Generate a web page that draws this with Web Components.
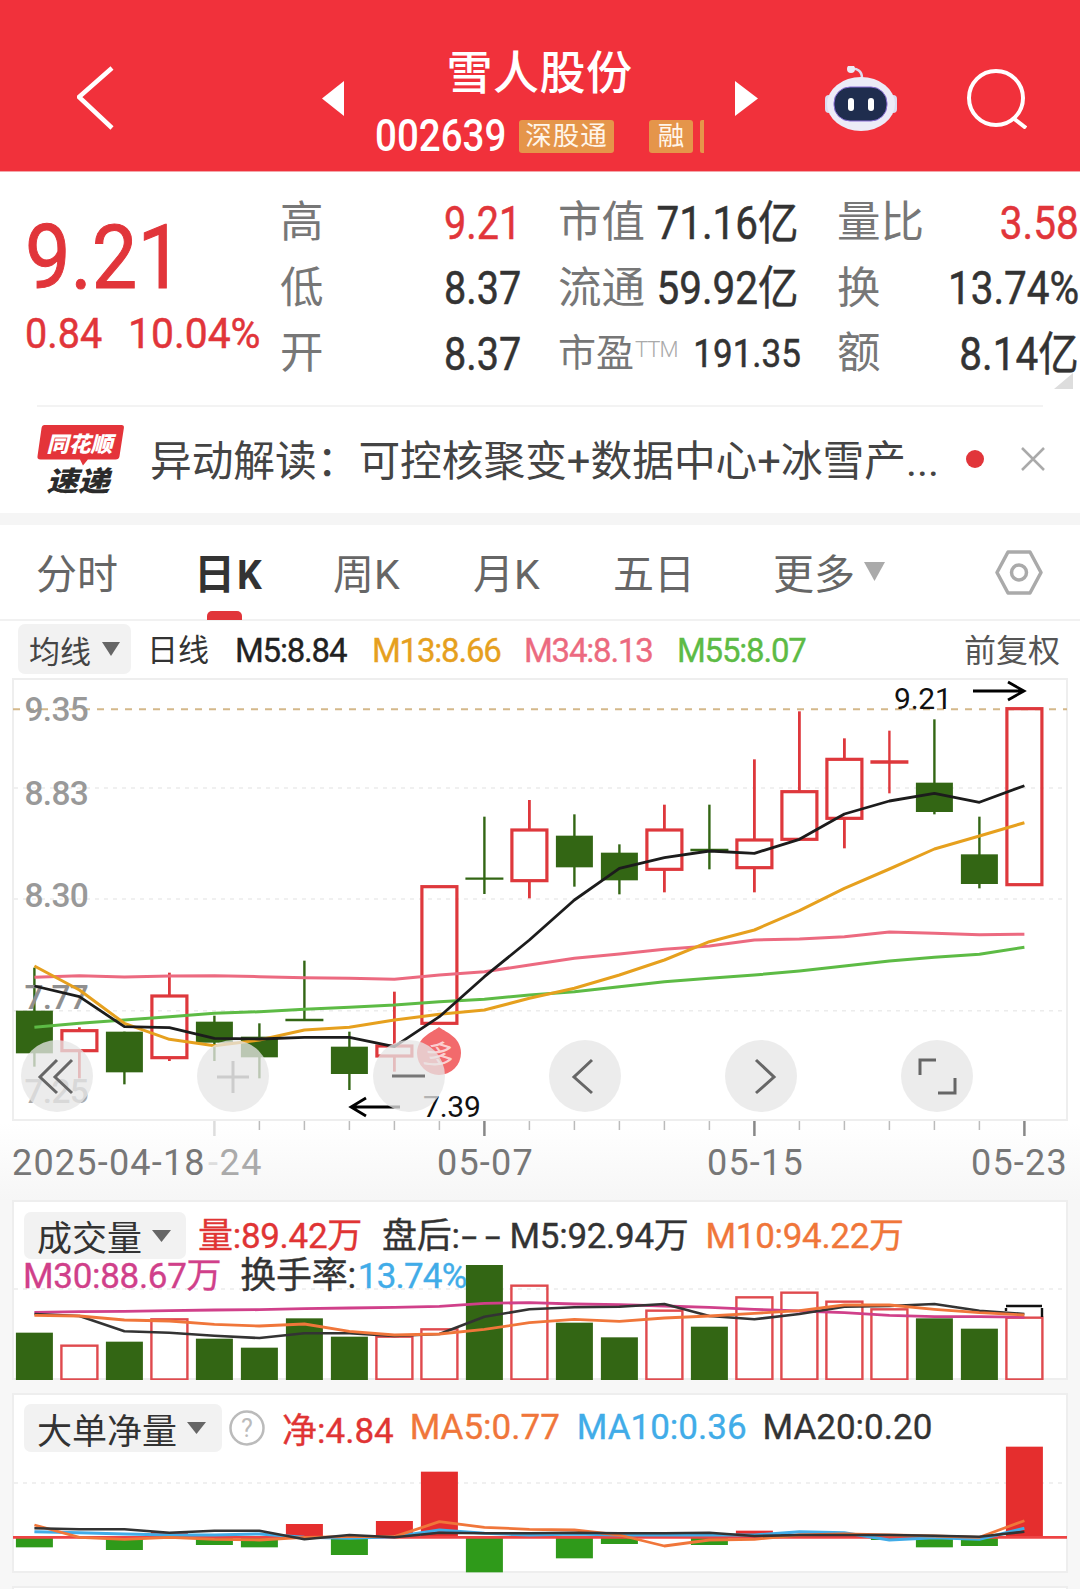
<!DOCTYPE html>
<html lang="zh"><head><meta charset="utf-8"><title>雪人股份</title>
<style>
html,body{margin:0;padding:0;background:#f7f7f7}
body{width:1080px;height:1589px;overflow:hidden;font-family:Roboto,"Noto Sans CJK SC",sans-serif;color:#333}
</style></head><body>
<stock-screen>
  <stock-header name="雪人股份" code="002639"></stock-header>
  <quote-panel></quote-panel>
  <news-banner>异动解读：可控核聚变+数据中心+冰雪产...</news-banner>
  <period-tabs></period-tabs>
  <ma-legend></ma-legend>
  <kline-chart></kline-chart>
  <volume-panel></volume-panel>
  <bigorder-panel></bigorder-panel>
  <panel-stub></panel-stub>
</stock-screen>
<script>
const FONT='Roboto,"Noto Sans CJK SC",sans-serif';
const XI=i=>+(34.4+45*i).toFixed(1);
function shadow(el,html){const r=el.attachShadow({mode:'open'});r.innerHTML=html;return r;}
function poly(vals,ymap,color,w){
  const p=vals.map((v,i)=>XI(i)+','+ymap(v).toFixed(1)).join(' ');
  return `<polyline points="${p}" fill="none" stroke="${color}" stroke-width="${w}" stroke-linejoin="round" stroke-linecap="butt"/>`;
}
const dotted=(y,x1=14,x2=1066)=>`<line x1="${x1}" x2="${x2}" y1="${y}" y2="${y}" stroke="#ececec" stroke-width="1.5" stroke-dasharray="4 5"/>`;

customElements.define('stock-screen',class extends HTMLElement{constructor(){super();shadow(this,`<style>:host{display:flex;flex-direction:column;width:1080px;height:1589px;overflow:hidden}</style><slot></slot>`);}});
customElements.define('panel-stub',class extends HTMLElement{constructor(){super();shadow(this,`<style>:host{display:block;width:1056px;margin:13px 0 0 12px;height:16px;background:#fff;box-sizing:border-box;border:2px solid #eee;border-bottom:0;flex:none}</style>`);}});

customElements.define('stock-header',class extends HTMLElement{constructor(){super();
 shadow(this,`<style>
 :host{display:grid;grid-template-columns:77px 245px 22px 391px 23px 67px 72px 69px 61px;height:172px;background:#F1313B;color:#fff;align-items:center;box-sizing:border-box;border-bottom:1px solid #f3a6aa;flex:none}
 svg{display:block;margin-top:26px}
 .mid{display:flex;flex-direction:column;height:172px;box-sizing:border-box;padding-top:44px}
 .t{font-size:46px;line-height:58px;text-align:center;letter-spacing:.5px;font-weight:500}
 .s{display:flex;align-items:center;padding-left:31px;margin-top:17px;height:34px}
 .c{font-size:44px;line-height:34px;width:144px;flex:none;transform:scaleX(.875);transform-origin:left;font-weight:500}
 .chip{background:#E5954A;border-radius:3px;height:33px;line-height:32px;font-size:26.500px;text-align:center;color:#fff6ea;flex:none}
 .a{width:95px;margin-right:35px;letter-spacing:1px}
 .b{width:44px;margin-right:7px}
 .e{width:4px;border-radius:2px 0 0 2px}
 </style>
 <span></span>
 <svg width="45" height="70" viewBox="0 0 45 70"><path d="M35 4 2 33 35 64" fill="none" stroke="#fff" stroke-width="4.500"/></svg>
 <svg width="22" height="36" viewBox="0 0 22 36"><path d="M22 0V35L0 17.500Z" fill="#fff"/></svg>
 <div class="mid"><div class="t">${this.getAttribute('name')}</div><div class="s"><span class="c">${this.getAttribute('code')}</span><span class="chip a">深股通</span><span class="chip b">融</span><span class="chip e"></span></div></div>
 <svg width="23" height="36" viewBox="0 0 23 36"><path d="M0 0V35L23 17.500Z" fill="#fff"/></svg>
 <span></span>
 <svg width="72" height="66" viewBox="825 65 72 66">
   <path d="M851 68c6-1 11 2 11 9" fill="none" stroke="#dcdcf0" stroke-width="2.500"/><circle cx="851" cy="68" r="4" fill="#eceaf6"/>
   <rect x="825" y="94" width="8" height="18" rx="4" fill="#dcdcf0"/><rect x="889" y="94" width="8" height="18" rx="4" fill="#dcdcf0"/>
   <ellipse cx="861" cy="103" rx="34" ry="27" fill="#ecebf7"/>
   <rect x="834" y="86" width="53" height="34" rx="16" fill="#1F2D4E" stroke="#8a6fd6" stroke-width="1"/>
   <rect x="848" y="97" width="6" height="13" rx="3" fill="#fff"/><rect x="868" y="97" width="6" height="13" rx="3" fill="#fff"/>
 </svg>
 <span></span>
 <svg width="61" height="60" viewBox="965 70 61 60"><circle cx="995" cy="99" r="27" fill="none" stroke="#fff" stroke-width="4"/><path d="M1012 119 1025 129" stroke="#fff" stroke-width="4"/></svg>
 `);}});

customElements.define('quote-panel',class extends HTMLElement{constructor(){super();
 const row=(l,v,red,l2,v2,l3,v3,red3,small)=>`
  <span class="l">${l}</span><span class="v"><b class="n ${red?'r':''}">${v}</b></span>
  <span class="l ${small?'sm':''}">${l2}${small?'<sup>TTM</sup>':''}</span><span class="v2"><b class="n2 ${small?'sm2':''}">${v2}</b></span>
  <span class="l">${l3}</span><span class="v3"><b class="n3 ${red3?'r':''}">${v3}</b></span>`;
 shadow(this,`<style>
 :host{display:grid;grid-template-columns:255px 1fr;height:233px;background:#fff;padding-left:25px;box-sizing:border-box;position:relative;width:1080px;flex:none}
 .left{padding-top:42px;color:#E1353A}
 .big{font-size:89px;line-height:88px;height:88px;width:175px;transform:scaleX(.91);transform-origin:left;-webkit-text-stroke:1px #E1353A}
 .sub{display:flex;font-size:43px;line-height:48px;margin-top:7px;-webkit-text-stroke:.5px #E1353A}
 .sub span{flex:none;transform-origin:left}
 .a{width:103px;transform:scaleX(.92)}
 .b{width:136px;transform:scaleX(.95)}
 .g{display:grid;grid-template-columns:164px 114px 95px 184px 110px 132px;grid-auto-rows:65.5px;padding-top:18px;align-items:center;font-size:46px}
 .l{font-size:43.500px;color:#777;line-height:65px;white-space:nowrap}
 .sm{font-size:38px}
 sup{font-size:22px;color:#aaa;font-weight:300;vertical-align:9px;line-height:0;letter-spacing:-1px;margin-left:1px}
 b{font-weight:400;display:inline-block;color:#333;white-space:nowrap;line-height:60px;-webkit-text-stroke:.5px currentColor}
 .r{color:#E1353A}
 .n{transform:scaleX(.86);transform-origin:left}
 .v{white-space:nowrap}
 .v2{display:flex;justify-content:flex-end;padding-right:38px;white-space:nowrap}
 .v3{display:flex;justify-content:flex-end;white-space:nowrap}
 .n2,.n3{transform:scaleX(.88);transform-origin:right}
 .sm2{font-size:38px;transform:scaleX(.92);margin-right:-2px}
 .cor{position:absolute;right:7px;top:201px}
 </style>
 <div class="left"><div class="big">9.21</div><div class="sub"><span class="a">0.84</span><span class="b">10.04%</span></div></div>
 <div class="g">
 ${row('高','9.21',1,'市值','71.16亿','量比','3.58',1)}
 ${row('低','8.37',0,'流通','59.92亿','换','13.74%',0)}
 ${row('开','8.37',0,'市盈','191.35','额','8.14亿',0,1)}
 </div>
 <svg class="cor" width="19" height="16" viewBox="0 0 19 16"><path d="M19 0V16H0Z" fill="#ddd"/></svg>`);}});

customElements.define('news-banner',class extends HTMLElement{constructor(){super();
 shadow(this,`<style>
 :host{display:flex;flex-direction:column;height:120px;background:#fff;box-sizing:border-box;width:1080px;flex:none}
 .hr{height:2px;background:#f3f3f3;margin:0 37px}
 .row{display:flex;align-items:center;height:106px;padding-left:37px}
 .logo{width:87px;height:71px;flex:none;margin-top:-1px;margin-right:26px;overflow:visible}
 .tx{width:791px;flex:none;font-size:41.700px;color:#444;white-space:nowrap;line-height:50px;margin-top:3px}
 .dot{width:18px;height:18px;border-radius:50%;background:#E1353A;flex:none;margin-left:25px;margin-top:-3px}
 svg.x{flex:none;margin-left:37px;margin-top:-3px}
 .gap{height:12px;background:#f5f5f5}
 text{font-family:"Noto Sans CJK SC",sans-serif;font-weight:900;font-style:italic}
 </style>
 <div class="hr"></div>
 <div class="row">
  <svg class="logo" viewBox="38 422 87 72"><path d="M45 423H123Q126 423 125.500 426L121 455Q120.500 458 117 458H89L84 464 81 458H41Q37 458 38 454L42 426Q42.500 423 45 423Z" fill="#E4343A"/>
   <text x="47" y="450" font-size="22" fill="#fff" textLength="67" lengthAdjust="spacingAndGlyphs">同花顺</text>
   <text x="47" y="490" font-size="28" fill="#2b2b2b" textLength="64" lengthAdjust="spacingAndGlyphs">速递</text></svg>
  <span class="tx"><slot></slot></span><span class="dot"></span>
  <svg class="x" width="24" height="24" viewBox="0 0 24 24"><path d="M1 1 23 23M23 1 1 23" stroke="#aaa" stroke-width="2.500"/></svg>
 </div>
 <div class="gap"></div>`);}});

customElements.define('period-tabs',class extends HTMLElement{constructor(){super();
 shadow(this,`<style>
 :host{display:grid;grid-template-columns:160px 137px 140px 140px 160px 222px 48px;height:96px;background:#fff;box-sizing:border-box;padding-left:36px;border-bottom:2px solid #f1f1f1;align-items:start;font-size:41px;color:#666;width:1080px;flex:none}
 span{line-height:48px;margin-top:26px;white-space:nowrap;position:relative;display:block}
 .on{font-weight:700;color:#333;margin-left:-2px}
 .on i{position:absolute;left:13px;top:60px;width:35px;height:9px;background:#E1353A;border-radius:5px 5px 0 0}
 .k{display:inline-block;font-weight:400}
 .on .k{font-weight:700;margin-left:2px;transform:scaleX(.95);transform-origin:left}
 svg{display:block}
 .m svg{display:inline-block;margin-left:9px;vertical-align:8px}
 .gear{margin-top:25px}
 </style>
 <span>分时</span><span class="on">日<b class="k">K</b><i></i></span><span>周<b class="k">K</b></span><span>月<b class="k">K</b></span><span>五日</span>
 <span class="m">更多<svg width="21" height="19" viewBox="0 0 21 19"><path d="M0 0H21L10.500 19Z" fill="#aaa"/></svg></span>
 <svg class="gear" width="48" height="45" viewBox="0 0 48 45"><path d="M13 2H35L46 22.500 35 43H13L2 22.500Z" fill="none" stroke="#aaa" stroke-width="3.500" stroke-linejoin="round"/><circle cx="24" cy="22.500" r="7.500" fill="none" stroke="#aaa" stroke-width="3.500"/></svg>`);}});

customElements.define('ma-legend',class extends HTMLElement{constructor(){super();
 shadow(this,`<style>
 :host{display:grid;grid-template-columns:129px 88px 137px 152px 153px 287px 1fr;height:57px;background:#fff;box-sizing:border-box;padding:3px 0 0 18px;font-size:33px;letter-spacing:-1.200px;white-space:nowrap;width:1080px;flex:none}
 span{line-height:50px;padding-top:2px;-webkit-text-stroke:.35px currentColor}
 .btn{width:113px;height:50px;background:#f2f2f2;border-radius:7px;display:flex;align-items:center;padding-left:11px;box-sizing:border-box;letter-spacing:0;font-size:31px;color:#444}
 .btn svg{margin-left:11px}
 .cn{letter-spacing:0;font-size:31px;color:#333;-webkit-text-stroke:0}
 </style>
 <div class="btn">均线<svg width="18" height="14" viewBox="0 0 18 14"><path d="M0 0H18L9 14Z" fill="#666"/></svg></div>
 <span class="cn">日线</span><span style="color:#222">M5:8.84</span><span style="color:#E6A01E">M13:8.66</span><span style="color:#EC6A80">M34:8.13</span><span style="color:#5DBB45">M55:8.07</span>
 <span class="cn" style="font-size:32px;color:#555">前复权</span>`);}});

customElements.define('kline-chart',class extends HTMLElement{constructor(){super();
 const Y=z=>670+z/3, RED='#DE383C', GRN='#336614';
 const C=[[893,1022,1150,1190,'g'],[1072,1082,1142,1225,'r'],[1085,1085,1207,1243,'g'],[908,978,1163,1173,'r'],[1037,1055,1118,1173,'g'],[1060,1100,1162,1225,'g'],[872,1050,1050,1050,'d'],[1085,1130,1212,1260,'g'],[965,1128,1158,1205,'r'],[650,650,1060,1060,'r'],[440,626,626,672,'d'],[390,480,632,685,'r'],[433,497,592,650,'g'],[523,548,631,673,'g'],[404,480,598,667,'r'],[404,540,540,598,'d'],[268,510,593,667,'r'],[124,365,508,510,'r'],[205,268,445,535,'r'],[182,276,276,370,'D'],[148,338,426,433,'g'],[440,553,642,655,'g'],[116,116,644,644,'r']];
 let s='';
 C.forEach((c,i)=>{const x=XI(i),[h,t,b,l,k]=c;
  if(k==='g'){s+=`<line x1="${x}" x2="${x}" y1="${Y(h)}" y2="${Y(l)}" stroke="${GRN}" stroke-width="2.400"/><rect x="${x-18.5}" y="${Y(t)}" width="37" height="${(b-t)/3}" fill="${GRN}"/>`;}
  else if(k==='d'||k==='D'){const col=k==='d'?GRN:RED;s+=`<line x1="${x}" x2="${x}" y1="${Y(h)}" y2="${Y(l)}" stroke="${col}" stroke-width="2.400"/><line x1="${x-19}" x2="${x+19}" y1="${Y(t)}" y2="${Y(t)}" stroke="${col}" stroke-width="${k==='d'?2.4:3.4}"/>`;}
  else{s+=`<line x1="${x}" x2="${x}" y1="${Y(h)}" y2="${Y(t)}" stroke="${RED}" stroke-width="2.800"/><line x1="${x}" x2="${x}" y1="${Y(b)}" y2="${Y(l)}" stroke="${RED}" stroke-width="2.800"/><rect x="${x-17.5}" y="${Y(t)}" width="35" height="${(b-t)/3}" fill="none" stroke="${RED}" stroke-width="3.200"/>`;}
 });
 const m5=[948,980,1070,1073,1105,1107,1102,1102,1130,1040,920,810,690,595,563,543,550,508,432,393,370,397,347];
 const m13=[888,960,1060,1108,1127,1110,1080,1072,1050,1033,1020,985,955,915,870,815,780,722,655,597,537,498,458];
 const m34=[922,917,921,918,917,920,923,925,928,915,905,885,865,852,838,828,810,807,800,786,790,794,793];
 const m55=[1072,1060,1050,1040,1030,1025,1018,1012,1005,995,988,975,965,950,935,925,915,903,888,873,862,853,832];
 const lab=(t,y,c='#999')=>`<text x="24.500" y="${y}" font-size="33.500" font-weight="500" fill="${c}" letter-spacing="-.7">${t}</text>`;
 const circ=x=>`<circle cx="${x}" cy="1076" r="36" fill="#e6e6e6" fill-opacity=".76"/>`;
 const ic=(d,c='#666')=>`<path d="${d}" fill="none" stroke="${c}" stroke-width="3"/>`;
 let ticks='';
 for(let i=4;i<=22;i++){const major=i===10||i===16||i===22,first=i===4;
  ticks+=`<line x1="${XI(i)}" x2="${XI(i)}" y1="1121" y2="${major||first?1136:1130}" stroke="${first?'#ddd':major?'#888':'#bbb'}" stroke-width="${major||first?2.5:1.500}"/>`;}
 shadow(this,`<style>
 :host{display:block;height:522px;width:1080px;background:linear-gradient(#fff 0,#fff 445px,#f6f6f6 100%);flex:none}
 svg{display:block;font-family:${FONT}}
 </style>
 <svg width="1080" height="522" viewBox="0 678 1080 522">
  <rect x="13" y="679" width="1054" height="441" fill="#fff" stroke="#eee" stroke-width="2"/>
  ${dotted(788)}${dotted(899)}${dotted(1010.7)}
  <line x1="13" x2="1067" y1="709.300" y2="709.300" stroke="#D4B88A" stroke-width="2" stroke-dasharray="7 7"/>
  ${lab('9.35',721)}${lab('8.83',805)}${lab('8.30',907)}
  ${s}
  ${lab('7.77',1009,'#8f8f8f')}
  ${lab('7.25',1103,'#aaa')}
  ${poly(m34,Y,'#EC6A80',3)}${poly(m55,Y,'#5DBB45',3)}${poly(m13,Y,'#E6A01E',3)}${poly(m5,Y,'#1c1c1c',2.8)}
  <text x="894" y="709" font-size="30" fill="#111" letter-spacing="-.2">9.21</text>
  <path d="M973 691H1024M1008 682 1024 691 1008 700" fill="none" stroke="#000" stroke-width="2.800"/>
  <path d="M400 1107H351M366 1098 351 1107 366 1116" fill="none" stroke="#000" stroke-width="2.800"/>
  <text x="423" y="1117" font-size="30" fill="#111" letter-spacing="-.2">7.39</text>
  <path d="M439 1027C443 1031 461 1036 461 1053A22 22 0 0 1 417 1053C417 1036 435 1031 439 1027Z" fill="#F26A6C"/>
  <text x="425" y="1066" font-size="30" fill="#fff" fill-opacity=".7" font-family="Noto Sans CJK SC" transform="rotate(18 439 1053)">多</text>
  ${[57,233,409,585,761,937].map(circ).join('')}
  ${ic('M57 1060 40 1077 57 1093M72 1060 55 1077 72 1093')}
  ${ic('M217 1077H249M233 1061V1093','#ccc')}
  ${ic('M392 1076H425','#777')}
  ${ic('M592 1060 574 1077 592 1093')}
  ${ic('M756 1060 774 1077 756 1093')}
  ${ic('M920 1075V1060H936M955 1078V1093H938')}
  ${ticks}
  <g font-size="36" fill="#777" letter-spacing="1.200">
   <text x="12" y="1175">2025-04-18</text><text x="208" y="1175" fill="#aaa" letter-spacing="1.500"><tspan fill="#ddd">-</tspan>24</text>
   <text x="437" y="1175">05-07</text><text x="707" y="1175">05-15</text><text x="971" y="1175">05-23</text>
  </g>
 </svg>`);}});

const PANEL_CSS=`
 :host{display:block;position:relative;width:1056px;margin-left:12px;background:#fff;box-sizing:border-box;border:2px solid #eee;overflow:visible;flex:none}
 svg.plot{position:absolute;left:-2px;top:-2px;display:block}
 .h{position:relative;display:flex;align-items:center;white-space:nowrap;font-size:35px;padding-left:10px;letter-spacing:-.3px}
 .btn{background:#f2f2f2;border-radius:7px;display:flex;align-items:center;padding-left:13px;box-sizing:border-box;font-size:35px;color:#333;flex:none;height:47px;letter-spacing:0}
 .btn svg{margin-left:10px}
 .txt{-webkit-text-stroke:.35px currentColor}
`;
customElements.define('volume-panel',class extends HTMLElement{constructor(){super();
 const Y=z=>1190+z/3, R='#DF4A4E', G='#336614';
 const B=[[428,'g'],[467,'r'],[455,'g'],[388,'r'],[446,'g'],[473,'g'],[385,'g'],[440,'g'],[440,'r'],[418,'r'],[225,'g'],[287,'r'],[398,'g'],[442,'g'],[362,'r'],[410,'g'],[322,'r'],[308,'r'],[335,'r'],[358,'r'],[385,'g'],[416,'g'],[383,'r']];
 let s='';
 B.forEach(([t,k],i)=>{const x=XI(i),y=Y(t);
  s+=k==='g'?`<rect x="${x-18.5}" y="${y}" width="37" height="${1380-y}" fill="${G}"/>`:`<rect x="${x-18}" y="${y}" width="36" height="${1380-y-.5}" fill="none" stroke="${R}" stroke-width="2.400"/>`;});
 const m5=[372,378,424,428,437,444,430,430,438,432,380,358,352,350,342,378,388,372,350,348,342,362,372];
 const m10=[376,378,390,393,403,408,402,424,435,432,418,398,388,394,384,378,370,362,345,345,358,368,375];
 const m30=[367,365,364,362,360,359,356,354,352,349,340,338,342,344,348,352,358,363,368,376,380,380,382];
 shadow(this,`<style>${PANEL_CSS}
 :host{height:180px}
 .r1{padding-top:10px;height:47px}
 .r2{height:30px;margin-top:-13px;padding-left:9px;align-items:baseline}
 .r1 .txt{margin-top:-6px}
 .dash{display:inline-block;width:50px;text-align:center;letter-spacing:5px;transform:scaleX(1.6);transform-origin:center}
 </style>
 <svg class="plot" width="1056" height="180" viewBox="12 1200 1056 180" style="font-family:${FONT}">
  ${dotted(1289)}
  ${s}
  <path d="M1006 1306H1042M1006 1308V1311M1042 1308V1317" fill="none" stroke="#111" stroke-width="2.400"/>
  ${poly(m30,Y,'#D0408A',2.8)}${poly(m5,Y,'#333',2.6)}${poly(m10,Y,'#F0763A',2.8)}
 </svg>
 <div class="h r1"><span class="btn" style="width:162px">成交量<svg width="19" height="12" viewBox="0 0 19 12"><path d="M0 0H19L9.500 12Z" fill="#666"/></svg></span>
  <span class="txt" style="color:#E03434;margin-left:12px">量:89.42万</span><span class="txt" style="margin-left:20px;color:#333">盘后:<span class="dash">--</span>M5:92.94万</span><span class="txt" style="color:#F0763A;margin-left:17px">M10:94.22万</span></div>
 <div class="h r2"><span class="txt" style="color:#D0408A">M30:88.67万</span><span class="txt" style="margin-left:19px;color:#333;font-size:36px">换手率:</span><span class="txt" style="color:#41ACE8;letter-spacing:-.8px;margin-left:2px">13.74%</span></div>`);}});

customElements.define('bigorder-panel',class extends HTMLElement{constructor(){super();
 const Y=z=>1190+z/3, R='#E52E2E', G='#2F9A1A', base=Y(1042);
 const V=[1072,0,1080,1026,1065,1072,1002,1095,993,845,1147,1036,1105,1062,0,1065,1022,1032,0,1050,1072,1068,770];
 let s='';
 V.forEach((t,i)=>{if(!t)return;const x=XI(i),y=Y(t);
  s+=t<1042?`<rect x="${x-18.5}" y="${y}" width="37" height="${base-y}" fill="${R}"/>`:`<rect x="${x-18.5}" y="${base}" width="37" height="${y-base}" fill="${G}"/>`;});
 const k=[1015,1018,1018,1028,1022,1022,1048,1035,1042,1028,1030,1030,1028,1030,1030,1028,1038,1035,1035,1035,1037,1040,1025];
 const b=[1025,1028,1032,1035,1035,1032,1042,1045,1040,1020,1030,1035,1032,1035,1035,1035,1035,1025,1028,1050,1043,1048,1015];
 const o=[1005,1042,1048,1042,1048,1050,1042,1040,1040,995,1012,1018,1020,1035,1068,1050,1048,1035,1032,1035,1038,1042,992];
 shadow(this,`<style>${PANEL_CSS}
 :host{height:180px;margin-top:13px}
 .h{padding-top:9px;height:48px;letter-spacing:0}
 svg.q{margin-left:7px;flex:none}
 .txt{margin-top:-2px}
 </style>
 <svg class="plot" width="1056" height="180" viewBox="12 1393 1056 180" style="font-family:${FONT}">
  ${dotted(1483)}
  ${s}
  <line x1="13" x2="1067" y1="${base}" y2="${base}" stroke="#E44" stroke-width="2.600"/>
  ${poly(b,Y,'#41ACE8',3)}${poly(o,Y,'#F0763A',2.8)}${poly(k,Y,'#333',2.6)}
 </svg>
 <div class="h"><span class="btn" style="width:198px;height:48px">大单净量<svg width="19" height="12" viewBox="0 0 19 12"><path d="M0 0H19L9.500 12Z" fill="#666"/></svg></span>
  <svg class="q" width="36" height="36" viewBox="0 0 36 36"><circle cx="18" cy="18" r="16.500" fill="none" stroke="#bbb" stroke-width="2.500"/><text x="18" y="27" font-size="25" fill="#bbb" text-anchor="middle" font-family="Roboto">?</text></svg>
  <span class="txt" style="color:#E03434;margin-left:17px">净:4.84</span><span class="txt" style="color:#F0763A;margin-left:16px">MA5:0.77</span><span class="txt" style="color:#41ACE8;margin-left:17px">MA10:0.36</span><span class="txt" style="color:#333;margin-left:16px">MA20:0.20</span></div>`);}});
</script>
</body></html>
